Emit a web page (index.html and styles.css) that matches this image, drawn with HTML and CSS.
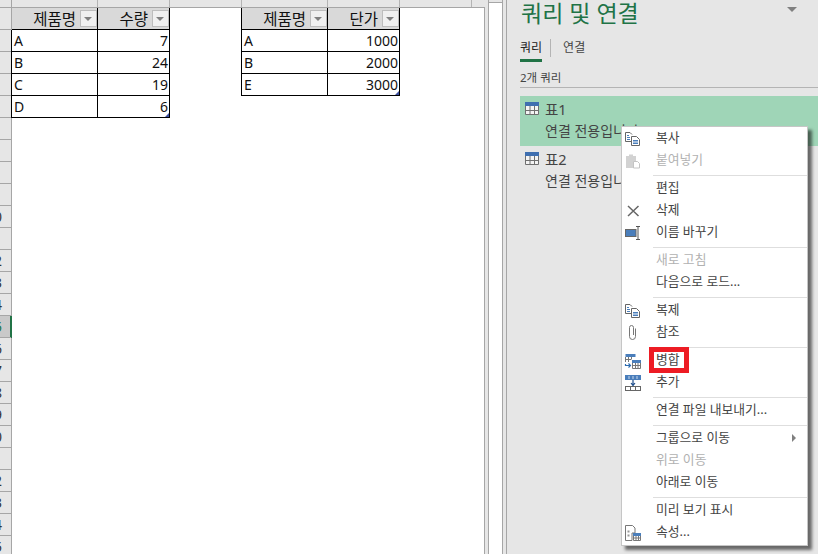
FILE: index.html
```html
<!DOCTYPE html>
<html>
<head>
    <title>쿼리 및 연결</title>
    <link rel="stylesheet" href="styles.css">
</head>
<body>
    <div class="app">
        <!-- worksheet -->
        <div class="sheet">
            <div class="col-heads">
                <div class="col-corner"></div>
                <div class="col col-wide"></div>
                <div class="col"></div>
                <div class="col"></div>
                <div class="col col-wide"></div>
                <div class="col"></div>
                <div class="col"></div>
            </div>
            <div class="sheet-body">
                <div class="row-heads">
                    <div class="rn"></div><div class="rn"></div><div class="rn"></div>
                    <div class="rn"></div><div class="rn"></div><div class="rn"></div>
                    <div class="rn"></div><div class="rn"></div><div class="rn"></div>
                    <div class="rn"><span>10</span></div>
                    <div class="rn"><span>11</span></div>
                    <div class="rn"><span>12</span></div>
                    <div class="rn"><span>13</span></div>
                    <div class="rn"><span>14</span></div>
                    <div class="rn rn-active"><span>15</span></div>
                    <div class="rn"><span>16</span></div>
                    <div class="rn"><span>17</span></div>
                    <div class="rn"><span>18</span></div>
                    <div class="rn"><span>19</span></div>
                    <div class="rn"><span>20</span></div>
                    <div class="rn"><span>21</span></div>
                    <div class="rn"><span>22</span></div>
                    <div class="rn"><span>23</span></div>
                    <div class="rn"><span>24</span></div>
                    <div class="rn"><span>25</span></div>
                </div>
                <div class="tables">
                    <div class="xl-table">
                        <div class="th"><span>제품명</span><i class="filter"></i></div>
                        <div class="th"><span>수량</span><i class="filter"></i></div>
                        <div class="td td-key">A</div><div class="td td-num">7</div>
                        <div class="td td-key">B</div><div class="td td-num">24</div>
                        <div class="td td-key">C</div><div class="td td-num">19</div>
                        <div class="td td-key">D</div><div class="td td-num td-last">6</div>
                    </div>
                    <div class="xl-table xl-table-second">
                        <div class="th th-key"><span>제품명</span><i class="filter"></i></div>
                        <div class="th"><span>단가</span><i class="filter"></i></div>
                        <div class="td td-key">A</div><div class="td td-num">1000</div>
                        <div class="td td-key">B</div><div class="td td-num">2000</div>
                        <div class="td td-key">E</div><div class="td td-num td-last">3000</div>
                    </div>
                </div>
            </div>
        </div>
        <div class="scroll-gap"></div>
        <div class="scroll-track"></div>
        <div class="scroll-gap scroll-gap-end"></div>

        <!-- queries pane -->
        <div class="pane">
            <div class="pane-head">
                <h1>쿼리 및 연결</h1>
                <i class="pane-arrow"></i>
            </div>
            <div class="tabs">
                <div class="tab tab-active">쿼리</div>
                <div class="tab-sep"></div>
                <div class="tab">연결</div>
            </div>
            <div class="count">2개 쿼리</div>
            <div class="query query-selected">
                <div class="query-name">
                    <svg class="table-ico" width="14" height="13" viewBox="0 0 14 13"><use href="#tbl"/></svg>
                    표1
                </div>
                <div class="query-sub">연결 전용입니다.</div>
            </div>
            <div class="query">
                <div class="query-name">
                    <svg class="table-ico" width="14" height="13" viewBox="0 0 14 13"><use href="#tbl"/></svg>
                    표2
                </div>
                <div class="query-sub">연결 전용입니다.</div>
            </div>
        </div>

        <!-- context menu -->
        <div class="menu">
            <div class="item">
                <span class="ico"><svg width="18" height="18" viewBox="0 0 18 18"><use href="#copy"/></svg></span>복사
            </div>
            <div class="item off">
                <span class="ico"><svg width="18" height="18" viewBox="0 0 18 18">
                    <path d="M3 5h3V3.500h4V5h3v12H3z" fill="#d2d2d2"/>
                    <path d="M10.500 10.500h4l2 2v4.500h-6z" fill="#fff" stroke="#c4c4c4"/>
                </svg></span>붙여넣기
            </div>
            <div class="sep"></div>
            <div class="item"><span class="ico"></span>편집</div>
            <div class="item">
                <span class="ico"><svg width="18" height="18" viewBox="0 0 18 18">
                    <path d="M5 5l10.500 10M15.500 5L5 15" stroke="#666" stroke-width="1.500" fill="none"/>
                </svg></span>삭제
            </div>
            <div class="item">
                <span class="ico"><svg width="18" height="18" viewBox="0 0 18 18">
                    <rect x="2.500" y="6.500" width="10.500" height="7" fill="#4a7ebb" stroke="#666"/>
                    <path d="M13 3.500h4M15 3.500v13M13 16.500h4" stroke="#555" fill="none"/>
                </svg></span>이름 바꾸기
            </div>
            <div class="sep"></div>
            <div class="item off"><span class="ico"></span>새로 고침</div>
            <div class="item"><span class="ico"></span>다음으로 로드...</div>
            <div class="sep"></div>
            <div class="item">
                <span class="ico"><svg width="18" height="18" viewBox="0 0 18 18"><use href="#copy"/></svg></span>복제
            </div>
            <div class="item">
                <span class="ico"><svg width="18" height="18" viewBox="0 0 18 18">
                    <path d="M12.500 5.500v8a3 3 0 0 1-6 0V4.500a2 2 0 0 1 4 0V12" stroke="#777" stroke-width="1" fill="none"/>
                </svg></span>참조
            </div>
            <div class="sep"></div>
            <div class="item">
                <span class="ico"><svg width="18" height="18" viewBox="0 0 18 18">
                    <rect x="2.500" y="3" width="10" height="3" fill="#4a7ebb"/>
                    <path d="M2.500 6v5M5.500 6v5M8.500 6v2M2.500 8.500h6" stroke="#777" fill="none"/>
                    <rect x="9" y="9" width="9" height="3" fill="#4a7ebb"/>
                    <path d="M9.500 12v5.500h8V12M12.500 12v5M15 12v5M9.500 14.500h8" stroke="#777" fill="none"/>
                    <path d="M2.500 13v1.500H7M5.500 12.500l2 2-2 2" stroke="#2e6cb0" stroke-width="1.200" fill="none"/>
                </svg></span>병합
                <div class="mark"></div>
            </div>
            <div class="item">
                <span class="ico"><svg width="18" height="18" viewBox="0 0 18 18">
                    <rect x="2" y="2" width="16" height="5" fill="#4a7ebb"/>
                    <path d="M6 3v3M10 3v3M14 3v3" stroke="#c8d8ec"/>
                    <path d="M10 7v5M8 10l2 2.500 2-2.500" stroke="#1f4e8c" stroke-width="1.200" fill="none"/>
                    <rect x="2.500" y="13.500" width="15" height="4" fill="#fff" stroke="#666"/>
                    <path d="M7.500 13.500v4M12.500 13.500v4" stroke="#666"/>
                </svg></span>추가
            </div>
            <div class="sep"></div>
            <div class="item"><span class="ico"></span>연결 파일 내보내기...</div>
            <div class="sep"></div>
            <div class="item item-sub"><span class="ico"></span>그룹으로 이동<i class="sub-arrow"></i></div>
            <div class="item off"><span class="ico"></span>위로 이동</div>
            <div class="item"><span class="ico"></span>아래로 이동</div>
            <div class="sep"></div>
            <div class="item"><span class="ico"></span>미리 보기 표시</div>
            <div class="item">
                <span class="ico"><svg width="18" height="18" viewBox="0 0 18 18">
                    <path d="M2.500 2.500h7l2.500 2.500v5H9v7.500H2.500z" stroke="#777" fill="#fff"/>
                    <path d="M4.500 8.500h2M4.500 12.500h2" stroke="#999" stroke-width="2"/>
                    <rect x="10" y="10" width="8" height="3" fill="#4a7ebb"/>
                    <path d="M10.500 13v4.500h7V13M13 13v4M15.500 13v4M10.500 15h7" stroke="#777" fill="none"/>
                </svg></span>속성...
            </div>
        </div>
    </div>

    <svg class="defs" width="0" height="0">
        <symbol id="tbl" viewBox="0 0 14 13">
            <rect x="0" y="0" width="14" height="4" fill="#3f6fb0"/>
            <path d="M.5 4v8.500h13V4M5 4v8M9.500 4v8M.5 8.500h13" stroke="#6f6f6f" fill="#f4f4f4"/>
        </symbol>
        <symbol id="copy" viewBox="0 0 18 18">
            <path d="M8.500 12.500h-6v-9h4.500l2 2" stroke="#666" fill="#fff"/>
            <path d="M4 6.500h2M4 8.500h3M4 10.500h3" stroke="#4a7ebb"/>
            <path d="M8.500 7.500h5l3 3v6h-8z" stroke="#666" fill="#fff"/>
            <path d="M10 11.500h5M10 13h5M10 14.500h5" stroke="#4a7ebb"/>
        </symbol>
    </svg>
</body>
</html>
```

FILE: styles.css
```css
html, body {
    margin: 0;
    height: 100%;
    overflow: hidden;
}
body {
    font-family: "Noto Sans", "Noto Sans CJK KR", sans-serif;
    color: #444;
    background: #fff;
}
.app {
    display: flex;
    width: 818px;
    height: 554px;
    position: relative;
    overflow: hidden;
}
.defs {
    position: absolute;
}

/* worksheet */
.sheet {
    width: 485px;
    display: flex;
    flex-direction: column;
    flex: none;
}
.col-heads {
    display: flex;
    height: 7px;
    background: #e6e6e6;
    border-bottom: 1px solid #a6a6a6;
    flex: none;
}
.col-corner {
    width: 11px;
    border-right: 1px solid #a6a6a6;
}
.col {
    width: 71px;
    border-right: 1px solid #b4b4b4;
}
.col-wide {
    width: 85px;
}
.sheet-body {
    display: flex;
    flex: 1;
    border-right: 1px solid #a6a6a6;
    min-height: 0;
}
.row-heads {
    width: 11px;
    flex: none;
    background: #e6e6e6;
    border-right: 1px solid #a6a6a6;
}
.rn {
    height: 21px;
    border-bottom: 1px solid #a6a6a6;
    display: flex;
    justify-content: flex-end;
    align-items: center;
    padding-right: 9px;
    overflow: hidden;
    font-size: 14px;
    color: #333;
}
.rn-active {
    background: #c9c9c9;
    box-shadow: inset -1px 0 0 #217346, 1px 0 0 #217346;
    color: #217346;
}
.tables {
    display: flex;
    align-items: flex-start;
    gap: 72px;
}

/* excel tables */
.xl-table {
    display: grid;
    grid-template-columns: 86px 72px;
    grid-auto-rows: 22px;
}
.th, .td {
    box-sizing: border-box;
    border-right: 1px solid #000;
    border-bottom: 1px solid #000;
    color: #111;
    font-size: 14px;
}
.th {
    background: #d9d9d9;
    display: flex;
    align-items: center;
    justify-content: flex-end;
    gap: 4px;
    font-size: 15.500px;
}
.td {
    line-height: 21px;
    padding: 0 1px 0 2px;
}
.td-key, .th-key {
    box-shadow: -1px 0 0 #000;
}
.td-num {
    text-align: right;
    position: relative;
}
.td-last::after {
    content: "";
    position: absolute;
    right: 0;
    bottom: 0;
    border-left: 4px solid transparent;
    border-bottom: 4px solid #3c4f9e;
}
.filter {
    width: 15px;
    height: 15px;
    border: 1px solid #bdbdbd;
    background: #f0f0f0;
    position: relative;
    flex: none;
}
.filter::after {
    content: "";
    position: absolute;
    left: 3px;
    top: 6px;
    border-left: 4px solid transparent;
    border-right: 4px solid transparent;
    border-top: 4px solid #808080;
}

/* scrollbar strip between sheet and pane */
.scroll-gap {
    width: 3px;
    background: #e6e6e6;
    flex: none;
}
.scroll-gap-end {
    border-right: 1px solid #a6a6a6;
}
.scroll-track {
    width: 13px;
    flex: none;
    background: #fff;
    border-left: 1px solid #a6a6a6;
    border-right: 1px solid #a6a6a6;
    position: relative;
}
.scroll-track::before {
    content: "";
    display: block;
    height: 2px;
    background: #e6e6e6;
    border-bottom: 1px solid #a6a6a6;
}

/* queries pane */
.pane {
    flex: 1;
    background: #e6e6e6;
    padding-left: 13px;
    min-width: 0;
}
.pane-head {
    display: flex;
    justify-content: space-between;
    height: 30px;
}
.pane-head h1 {
    margin: -3px 0 0 1px;
    font-size: 23px;
    line-height: 32px;
    font-weight: 400;
    color: #217346;
    white-space: nowrap;
}
.pane-arrow {
    margin: 7px 21px 0 0;
    width: 0;
    height: 0;
    border-left: 5px solid transparent;
    border-right: 5px solid transparent;
    border-top: 5px solid #808080;
}
.tabs {
    display: flex;
    align-items: flex-start;
    height: 31px;
    margin-top: 9px;
    font-size: 12px;
}
.tab {
    line-height: 18px;
    color: #444;
    height: 20px;
}
.tab-active {
    color: #222;
    border-bottom: 3px solid #217346;
}
.tab-sep {
    width: 1px;
    height: 18px;
    background: #b4b4b4;
    margin: 0 12px 0 8px;
}
.count {
    font-size: 11.500px;
    line-height: 17px;
    height: 18px;
    border-bottom: 1px solid #b4b4b4;
    margin-bottom: 8px;
    margin-top: -1px;
    color: #444;
}
.query {
    height: 50px;
    padding-left: 5px;
    box-sizing: border-box;
}
.query-selected {
    background: #9fd5b7;
}
.query-name {
    display: flex;
    align-items: center;
    gap: 6px;
    font-size: 14.500px;
    height: 25px;
    color: #444;
}
.query-sub {
    font-size: 14px;
    line-height: 20px;
    padding-left: 20px;
    white-space: nowrap;
    color: #444;
}

/* context menu */
.menu {
    position: absolute;
    left: 621px;
    top: 126px;
    width: 185px;
    background: #fff;
    border: 1px solid #c6c6c6;
    box-shadow: 4px 4px 3px rgba(0, 0, 0, 0.55);
    padding-bottom: 2px;
    font-size: 12.800px;
    color: #444;
}
.item {
    display: flex;
    align-items: center;
    height: 22px;
    box-sizing: border-box;
    padding-bottom: 3px;
    position: relative;
    white-space: nowrap;
}
.off {
    color: #b1b1b1;
}
.ico {
    width: 34px;
    height: 18px;
    margin-top: 2px;
    align-self: flex-start;
    padding-left: 1px;
    box-sizing: border-box;
    flex: none;
}
.ico svg {
    display: block;
}
.sep {
    height: 1px;
    background: #dedede;
    margin: 4px 0 1px 31px;
}
.sub-arrow {
    position: absolute;
    right: 11px;
    top: 7px;
    border-top: 4px solid transparent;
    border-bottom: 4px solid transparent;
    border-left: 4px solid #808080;
}
.mark {
    position: absolute;
    left: 27px;
    top: -2px;
    width: 30px;
    height: 16px;
    border: 5px solid #ed1c24;
}
```
